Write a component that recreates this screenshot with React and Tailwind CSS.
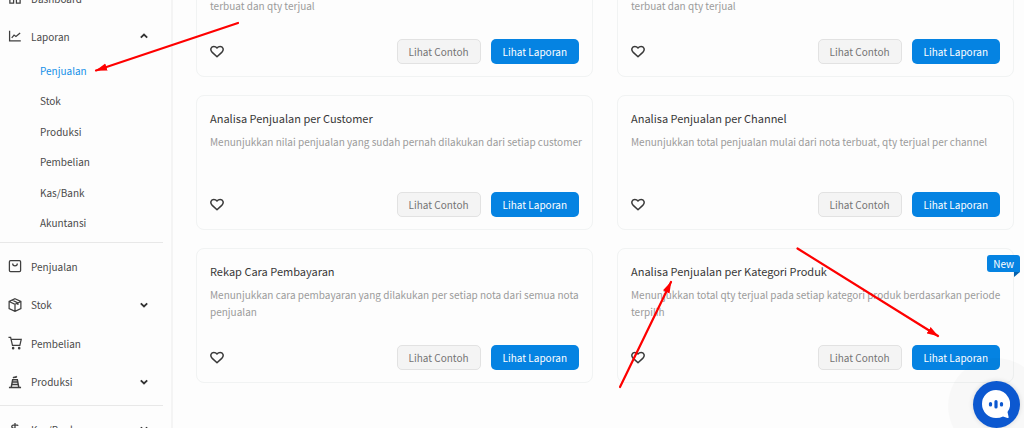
import { useState } from 'react';

const reports = [
  { title: 'Analisa Penjualan per Barang', description: 'Menunjukkan total penjualan untuk setiap barang mulai dari jumlah nota yang terbuat dan qty terjual' },
  { title: 'Analisa Penjualan per Kota', description: 'Menunjukkan total penjualan untuk setiap kota mulai dari jumlah nota yang terbuat dan qty terjual' },
  { title: 'Analisa Penjualan per Customer', description: 'Menunjukkan nilai penjualan yang sudah pernah dilakukan dari setiap customer' },
  { title: 'Analisa Penjualan per Channel', description: 'Menunjukkan total penjualan mulai dari nota terbuat, qty terjual per channel' },
  { title: 'Rekap Cara Pembayaran', description: 'Menunjukkan cara pembayaran yang dilakukan per setiap nota dari semua nota penjualan' },
  { title: 'Analisa Penjualan per Kategori Produk', description: 'Menunjukkan total qty terjual pada setiap kategori produk berdasarkan periode terpilih', isNew: true },
];

const subMenu = ['Penjualan', 'Stok', 'Produksi', 'Pembelian', 'Kas/Bank', 'Akuntansi'];

const icons = {
  dashboard: <path d="M2 2h4v4H2zM9 2h4v4H9zM2 9h4v4H2zM9 9h4v4H9z" />,
  chart: <path d="M1.700 2v10.800h12M4 9.500l2.500-3 2 1.500L13 4.200" />,
  bag: (
    <>
      <rect x="1.500" y="1.800" width="12" height="11.800" rx="1.200" />
      <path d="M5 4.800c0 3.300 5 3.300 5 0" />
    </>
  ),
  box: <path d="M7.500.8 13.800 3.700v7.600l-6.300 3-6.300-3V3.700zM1.200 3.700l6.300 3 6.300-3M7.500 6.700v7.600M4.300 2.200l6.300 3v2.300" />,
  cart: (
    <>
      <path d="M.5 1.500h2.300l2 8.500h7.900l1.500-6.500H3.500" />
      <circle cx="5.500" cy="13" r=".7" fill="currentColor" />
      <circle cx="12" cy="13" r=".7" fill="currentColor" />
    </>
  ),
  factory: <path d="M1 13.500h13M3.500 13 5 5h5l1.500 8M4.500 7.500h6M4 10.300h7M5.500 3.200c1-1.500 2 .3 4-1.700" strokeWidth="1.6" />,
  cash: <path d="M11 4c-1-1.300-7-1.500-7 1s7 1.600 7 4.500-6 2.500-7.500.8M7.500 1v13" />,
};

function MenuItem({ icon, label, arrow }) {
  return (
    <button className="flex h-full min-h-[38px] w-full items-center pl-2 pr-[23px] text-left">
      <svg viewBox="0 0 15 15" className="h-[14px] w-[14px] fill-none stroke-[#3f3f3f] stroke-[1.35px] text-[#3f3f3f]">
        {icons[icon]}
      </svg>
      <span className="ml-[9px] flex-1">{label}</span>
      {arrow && (
        <svg viewBox="0 0 8 8" className="h-2 w-2 fill-none stroke-[#333] stroke-[1.8px]">
          <path d={arrow === 'up' ? 'M.8 5.700 4 2.500l3.200 3.200' : 'M.8 2.300 4 5.500l3.200-3.200'} />
        </svg>
      )}
    </button>
  );
}

function ReportCard({ report }) {
  const [liked, setLiked] = useState(false);

  return (
    <article className="relative flex h-[135px] flex-col rounded-lg border border-[#f1f3f3] px-[13px] py-3">
      <h2 className="mt-[2px] text-[11px] leading-4 text-[#383838]">{report.title}</h2>
      <p className="-mr-2 mt-[7px] text-[10px] leading-[17px] text-[#9b9b9b]">{report.description}</p>
      <div className="mt-auto flex items-center gap-[10px]">
        <button aria-label="Favorit" aria-pressed={liked} onClick={() => setLiked(!liked)} className="mr-auto">
          <svg viewBox="0 0 14 13" className="h-[13px] w-[14px] fill-none stroke-[#3a3a3a] stroke-[1.5px]">
            <path d="M7 11.800 2 7.100C-.4 4.300 1.300 1.400 3.900 1.400 5.300 1.400 6.400 2.200 7 3c.6-.8 1.700-1.600 3.100-1.600 2.600 0 4.300 2.900 1.900 5.700z" strokeLinejoin="round" />
          </svg>
        </button>
        <button className="h-[25px] rounded-[5px] border border-[#e2e2e2] bg-[#f4f4f4] px-[11px] pb-px text-[10px] text-[#757575]">Lihat Contoh</button>
        <button className="h-[25px] rounded-[5px] bg-[#0583e2] px-3 pb-px text-[10px] text-white">Lihat Laporan</button>
      </div>
      {report.isNew && (
        <span className="absolute -right-[7px] top-[6px] h-[17px] rounded-[3px] rounded-br-none bg-[#0583e2] px-[6px] text-[10px] leading-[17px] text-white">
          New
          <svg viewBox="0 0 6 5" className="absolute right-0 top-full h-[5px] w-[6px] fill-[#0562ad]">
            <path d="M0 0h6L0 5z" />
          </svg>
        </span>
      )}
    </article>
  );
}

function Arrows() {
  return (
    <svg viewBox="0 0 1024 428" className="pointer-events-none absolute left-0 top-0 h-[428px] w-[1024px]" aria-hidden="true">
      <defs>
        <marker id="head" markerUnits="userSpaceOnUse" markerWidth="12" markerHeight="8" refX="11" refY="4" orient="auto">
          <path d="M0 0.300 11.500 4 0 7.700z" fill="#fe0000" />
        </marker>
      </defs>
      <g stroke="#fe0000" strokeWidth="2.2" strokeLinecap="round">
        <path d="M238 23 96 70.500" markerEnd="url(#head)" />
        <path d="M620 387 671 282" markerEnd="url(#head)" />
        <path d="M797.500 248.500 938 336" markerEnd="url(#head)" />
      </g>
    </svg>
  );
}

export default function App() {
  return (
    <div className="relative flex h-screen overflow-hidden bg-[#fdfdfd] font-['Noto_Sans_CJK_SC','Noto_Sans',sans-serif]">
      <aside className="w-[173px] shrink-0 border-r-2 border-[#f4f4f4] text-[10px] text-[#4a4a4a]">
        <nav className="-mt-[21px]">
          <MenuItem icon="dashboard" label="Dashboard" />
          <MenuItem icon="chart" label="Laporan" arrow="up" />
          <ul className="grid h-[183px] grid-rows-6 pl-10">
            {subMenu.map((label) => (
              <li key={label} className="flex items-center">
                <a href="#" className={label === 'Penjualan' ? 'text-[#1590e8]' : ''}>{label}</a>
              </li>
            ))}
          </ul>
          <hr className="mr-2 mt-1 border-[#e8e8e8]" />
          <div className="my-1 grid h-[154px] grid-rows-4">
            <MenuItem icon="bag" label="Penjualan" />
            <MenuItem icon="box" label="Stok" arrow="down" />
            <MenuItem icon="cart" label="Pembelian" />
            <MenuItem icon="factory" label="Produksi" arrow="down" />
          </div>
          <hr className="mr-2 border-[#e8e8e8]" />
          <div className="pt-1">
            <MenuItem icon="cash" label="Kas/Bank" arrow="down" />
          </div>
        </nav>
      </aside>

      <main className="-mt-[58px] flex-1 pl-[23px] pr-[10px]">
        <div className="grid grid-cols-2 gap-x-6 gap-y-[18px]">
          {reports.map((report) => (
            <ReportCard key={report.title} report={report} />
          ))}
        </div>
      </main>

      {/* Chat */}
      <div className="absolute -bottom-[26px] -right-[20px] flex h-[96px] w-[96px] items-center justify-center rounded-full bg-black/2">
        <button aria-label="Chat" className="mb-1 flex h-[47px] w-[47px] items-center justify-center rounded-full bg-[#0c58d0] shadow-[0_0_5px_#0002]">
          <svg viewBox="0 0 28 28" className="h-7 w-7">
            <path d="M14 0a14 14 0 1 0 0 28q4 0 7-1.500l4.500 1.500q1.500 0 1-1.500L25.500 22A14 14 0 0 0 14 0z" fill="#fff" />
            <path d="M8.500 13.500v1.500M14 11.500v5.500M19.500 13.500v1.500" stroke="#0c58d0" strokeWidth="3.2" strokeLinecap="round" />
          </svg>
        </button>
      </div>

      <Arrows />
    </div>
  );
}
